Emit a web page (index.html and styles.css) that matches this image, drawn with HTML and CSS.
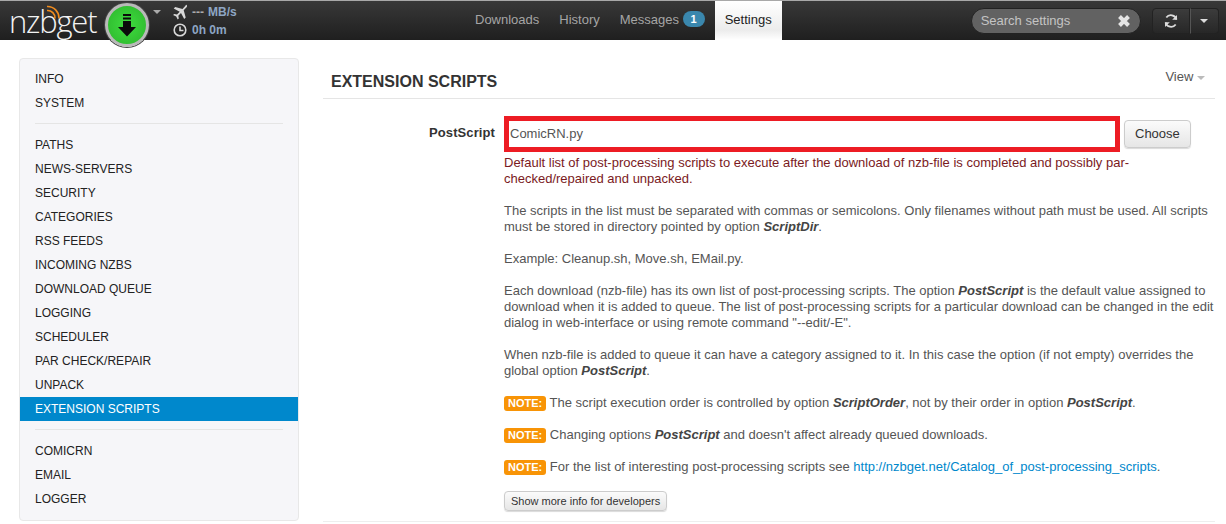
FILE: index.html
```html
<!DOCTYPE html>
<html lang="en">
<head>
    <meta charset="UTF-8">
    <meta name="viewport" content="width=device-width, initial-scale=1.0">
    <title>NZBGet Settings</title>
    <link rel="stylesheet" href="styles.css">
</head>
<body>
    <div class="navbar">
        <div class="brand">
            <span class="logo">nzbget</span>
            <svg class="logo-wifi" width="14" height="14" viewBox="0 0 14 14" fill="none" stroke="#f08c1e" stroke-width="1.6">
                <path d="M1 5.500a7.500 7.500 0 0 1 8 8"/>
                <path d="M1 1.500a11.500 11.500 0 0 1 12 12"/>
            </svg>
            <div class="play-button">
                <svg width="18" height="23" viewBox="0 0 18 23" fill="#0b0b0b">
                    <rect x="5" y="0" width="8" height="2"/>
                    <rect x="5" y="3.500" width="8" height="2"/>
                    <path d="M5 7h8v6h5l-9 9.500L0 13h5z"/>
                </svg>
            </div>
            <span class="caret caret-grey"></span>
        </div>
        <div class="status">
            <div class="status-row">
                <svg width="16" height="16" viewBox="0 0 16 16" fill="#d8d8d8">
                    <path d="M14.600.9c.8.7.5 1.900-.3 2.700L11.700 6.200l2 7.300-1.500 1.500-3.200-6-2.700 2.700.5 2.800-1.100 1.100-1.500-3.100-3.100-1.500 1.100-1.100 2.800.5 2.700-2.700-6-3.200L3.200 3l7.300 2L13 2.300c.7-.8 1-2 1.600-1.400z"/>
                </svg>
                <span class="status-dash">---</span> <span class="status-value">MB/s</span>
            </div>
            <div class="status-row">
                <svg width="16" height="16" viewBox="0 0 16 16" fill="none" stroke="#d8d8d8" stroke-width="1.600">
                    <circle cx="8" cy="8" r="5.800"/>
                    <path d="M8 4.500V8.500H11.500"/>
                </svg>
                <span class="status-value">0h 0m</span>
            </div>
        </div>
        <ul class="nav-tabs">
            <li>Downloads</li>
            <li>History</li>
            <li>Messages <span class="badge">1</span></li>
            <li class="active">Settings</li>
        </ul>
        <div class="search">
            <span class="search-text">Search settings</span>
            <svg width="14" height="14" viewBox="0 0 14 14" stroke="#e4e4e4" stroke-width="4">
                <path d="M2.500 2.500l9 9M11.500 2.500l-9 9"/>
            </svg>
        </div>
        <div class="btn-group">
            <div class="nav-btn">
                <svg width="16" height="16" viewBox="0 0 16 16" fill="none" stroke="#dcdcdc" stroke-width="1.800">
                    <path d="M13.500 6.500A5.800 5.800 0 0 0 3.300 4.500"/>
                    <path d="M2.500 9.500A5.800 5.800 0 0 0 12.700 11.500"/>
                    <path d="M14 2v4.800H9.200z" fill="#dcdcdc" stroke="none"/>
                    <path d="M2 14V9.200h4.800z" fill="#dcdcdc" stroke="none"/>
                </svg>
            </div>
            <div class="nav-btn nav-btn-caret"><span class="caret caret-light"></span></div>
        </div>
    </div>

    <div class="container">
        <div class="sidebar">
            <ul class="side-list">
                <li>INFO</li>
                <li>SYSTEM</li>
                <li class="divider"></li>
                <li>PATHS</li>
                <li>NEWS-SERVERS</li>
                <li>SECURITY</li>
                <li>CATEGORIES</li>
                <li>RSS FEEDS</li>
                <li>INCOMING NZBS</li>
                <li>DOWNLOAD QUEUE</li>
                <li>LOGGING</li>
                <li>SCHEDULER</li>
                <li>PAR CHECK/REPAIR</li>
                <li>UNPACK</li>
                <li class="active">EXTENSION SCRIPTS</li>
                <li class="divider"></li>
                <li>COMICRN</li>
                <li>EMAIL</li>
                <li>LOGGER</li>
            </ul>
        </div>
        <div class="content">
            <div class="section-header">
                <h1 class="section-title">EXTENSION SCRIPTS</h1>
                <span class="view-link">View <span class="caret caret-grey"></span></span>
            </div>
            <div class="option">
                <label class="option-label">PostScript</label>
                <div class="option-body">
                    <div class="option-input">
                        <div class="text-input">ComicRN.py</div>
                        <button class="btn">Choose</button>
                    </div>
                    <p class="help">
                        <span class="help-default">Default list of post-processing scripts to execute after the download of nzb-file is completed and possibly par-checked/repaired and unpacked.</span>
                    </p>
                    <p class="help">The scripts in the list must be separated with commas or semicolons. Only filenames without path must be used. All scripts must be stored in directory pointed by option <b><i>ScriptDir</i></b>.</p>
                    <p class="help">Example: Cleanup.sh, Move.sh, EMail.py.</p>
                    <p class="help">Each download (nzb-file) has its own list of post-processing scripts. The option <b><i>PostScript</i></b> is the default value assigned to download when it is added to queue. The list of post-processing scripts for a particular download can be changed in the edit dialog in web-interface or using remote command "--edit/-E".</p>
                    <p class="help">When nzb-file is added to queue it can have a category assigned to it. In this case the option (if not empty) overrides the global option <b><i>PostScript</i></b>.</p>
                    <p class="help"><span class="note">NOTE:</span> The script execution order is controlled by option <b><i>ScriptOrder</i></b>, not by their order in option <b><i>PostScript</i></b>.</p>
                    <p class="help"><span class="note">NOTE:</span> Changing options <b><i>PostScript</i></b> and doesn't affect already queued downloads.</p>
                    <p class="help"><span class="note">NOTE:</span> For the list of interesting post-processing scripts see <a class="help-link">http://nzbget.net/Catalog_of_post-processing_scripts</a>.</p>
                    <button class="btn btn-small">Show more info for developers</button>
                </div>
            </div>
        </div>
    </div>
</body>
</html>
```

FILE: styles.css
```css
* {
    margin: 0;
    padding: 0;
    box-sizing: border-box;
}

body {
    height: 524px;
    overflow: hidden;
    background-color: white;
    font-family: "Liberation Sans", Arial, sans-serif;
    font-size: 13px;
    color: #333;
}

ul {
    list-style: none;
}

.navbar {
    height: 40px;
    display: flex;
    align-items: center;
    background: linear-gradient(#383838, #1f1f1f);
    border-top: 1px solid #a8a8a8;
}

.brand {
    width: 172px;
    height: 39px;
    display: flex;
    align-items: center;
    position: relative;
    padding-left: 9px;
}

.logo {
    width: 96px;
    font-family: "Open Sans", sans-serif;
    font-weight: 300;
    font-size: 31px;
    letter-spacing: -1.200px;
    color: #f2f2f2;
    line-height: 38px;
    white-space: nowrap;
}

.logo-wifi {
    position: absolute;
    left: 46px;
    top: 4px;
}

.play-button {
    width: 44px;
    height: 44px;
    flex-shrink: 0;
    margin-top: 9px;
    border-radius: 50%;
    border: 3px solid #b9b9b9;
    background: radial-gradient(#3fdc3f, #2cb52c);
    box-shadow: 0 0 0 1px #444;
    display: flex;
    align-items: center;
    justify-content: center;
    position: relative;
    z-index: 2;
}

.caret {
    display: inline-block;
    width: 0;
    height: 0;
    border-left: 4px solid transparent;
    border-right: 4px solid transparent;
    border-top: 4px solid #aaa;
    vertical-align: middle;
}

.brand .caret {
    margin: -18px 0 0 4px;
}

.caret-light {
    border-top-color: #ddd;
}

.status {
    width: 200px;
    font-size: 12px;
    font-weight: bold;
    color: #8ea6c4;
}

.status-row {
    display: flex;
    align-items: center;
    gap: 4px;
    height: 18px;
}

.status-dash {
    color: #aaa;
}

.nav-tabs {
    display: flex;
    height: 39px;
    margin-left: 93px;
}

.nav-tabs li {
    padding: 0 10px;
    line-height: 38px;
    color: #a5a5a5;
    font-size: 13px;
}

.nav-tabs li.active {
    background: linear-gradient(white, #ececec 75%, white);
    color: #222;
    width: 67px;
    text-align: center;
    padding: 0;
}

.badge {
    display: inline-block;
    width: 22px;
    height: 16px;
    line-height: 16px;
    border-radius: 8px;
    background-color: #3a87ad;
    color: white;
    text-align: center;
    font-size: 11px;
    font-weight: bold;
    vertical-align: 1px;
}

.search {
    width: 170px;
    height: 26px;
    margin-left: 189px;
    padding: 0 9px;
    display: flex;
    align-items: center;
    justify-content: space-between;
    border: 1px solid #222;
    border-radius: 13px;
    background-color: #626262;
    color: #c4c4c4;
    font-size: 13px;
}

.btn-group {
    display: flex;
    margin-left: 11px;
    height: 26px;
}

.nav-btn {
    width: 38px;
    display: flex;
    align-items: center;
    justify-content: center;
    background: linear-gradient(#3c3c3c, #272727);
    border: 1px solid #222;
    border-radius: 4px 0 0 4px;
}

.nav-btn-caret {
    width: 29px;
    border-left: 1px solid #555;
    border-radius: 0 4px 4px 0;
}

.container {
    display: flex;
    padding: 18px 13px 0 19px;
}

.sidebar {
    width: 280px;
    height: 463px;
    flex-shrink: 0;
    padding: 8px 0 10px;
    background-color: #f6f6f9;
    border: 1px solid #e8e8e8;
    border-radius: 4px;
}

.side-list li {
    height: 24px;
    line-height: 24px;
    padding-left: 15px;
    font-size: 12px;
    color: #222;
}

.side-list li.active {
    background-color: #0088cc;
    color: white;
    width: 278px;
}

.side-list li.divider {
    height: 1px;
    margin: 8px 15px 9px;
    padding: 0;
    background-color: #e5e5e5;
}

.content {
    flex: 1;
    margin-left: 24px;
    border-bottom: 1px solid #eee;
    height: 464px;
}

.section-header {
    height: 41px;
    display: flex;
    justify-content: space-between;
    border-bottom: 1px solid #e5e5e5;
    padding-left: 8px;
}

.section-title {
    font-size: 16px;
    line-height: 48px;
    color: #333;
}

.view-link {
    margin-right: 10px;
    line-height: 38px;
    color: #555;
    font-size: 13px;
}

.view-link .caret {
    border-top-color: #bbb;
}

.option {
    display: flex;
    padding-top: 17px;
}

.option-label {
    width: 172px;
    text-align: right;
    font-weight: bold;
    line-height: 33px;
    font-size: 13px;
    letter-spacing: 0.100px;
}

.option-body {
    width: 711px;
    margin-left: 9px;
}

.option-input {
    display: flex;
    align-items: center;
    gap: 4px;
    margin-bottom: 3px;
}

.text-input {
    width: 616px;
    height: 36px;
    line-height: 26px;
    padding-left: 1px;
    border: 5px solid #ed1c24;
    color: #555;
    font-size: 13px;
}

.btn {
    height: 28px;
    padding: 0 10px 2px;
    background: linear-gradient(#fbfbfb, #e6e6e6);
    border: 1px solid #ccc;
    border-radius: 4px;
    box-shadow: 0 1px 1px rgba(0,0,0,0.15);
    color: #333;
    font-family: inherit;
    font-size: 13px;
}

.btn-small {
    display: block;
    height: 20px;
    padding: 0 6px;
    font-size: 11px;
    margin-top: 16px;
}

.help {
    font-size: 13px;
    line-height: 16px;
    margin-bottom: 16px;
    color: #555;
}

.help:nth-last-child(2) {
    margin-bottom: 0;
}

.help-default {
    color: #7a1a22;
}

.help b {
    color: #444;
}

.help-link {
    color: #0088cc;
}

.note {
    display: inline-block;
    height: 15px;
    line-height: 15px;
    padding: 0 4px;
    border-radius: 3px;
    background-color: #f89406;
    color: white;
    font-size: 11px;
    font-weight: bold;
}
```
